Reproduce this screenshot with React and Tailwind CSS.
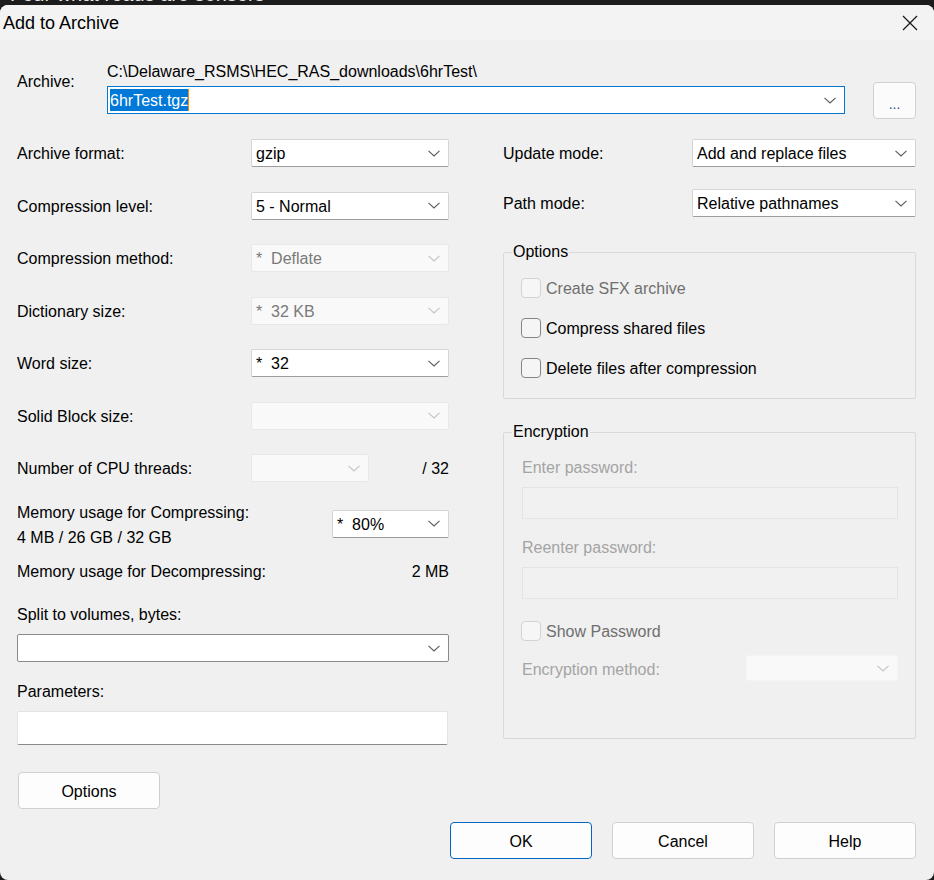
import React from "react";

function Chevron({ disabled }) {
  return (
    <svg width="12" height="7" viewBox="0 0 12 7" className="shrink-0">
      <path
        d="M0.5 0.8 L6 6 L11.5 0.8"
        fill="none"
        stroke={disabled ? "#c4c4c4" : "#5a5a5a"}
        strokeWidth="1.1"
      />
    </svg>
  );
}

function Select({ value, disabled, className = "" }) {
  return (
    <div
      className={
        "flex items-center justify-between pl-[4px] pr-[8px] border rounded-[2px] " +
        (disabled
          ? "bg-[#f9f9f9] border-[#e8e8e8] text-[#7a7a7a] "
          : "bg-white border-[#d4d4d4] border-b-[#9c9c9c] text-black ") +
        className
      }
    >
      <span className="whitespace-pre leading-[20px] pt-[2px]">{value}</span>
      <Chevron disabled={disabled} />
    </div>
  );
}

function Row({ label, children }) {
  return (
    <div className="flex items-center justify-between h-[28px]">
      <span className="leading-[20px] pt-[2px]">{label}</span>
      {children}
    </div>
  );
}

function Check({ label, disabled, labelClass = "" }) {
  return (
    <div className="flex items-center h-[20px] gap-[5px]">
      <div
        className={
          "w-[20px] h-[20px] rounded-[4px] border " +
          (disabled
            ? "border-[#d3d3d3] bg-[#f6f6f6]"
            : "border-[#858585] bg-[#f5f5f5]")
        }
      />
      <span
        className={
          "leading-[20px] pt-[2px] " +
          (disabled ? "text-[#6f6f6f] " : "text-black ") +
          labelClass
        }
      >
        {label}
      </span>
    </div>
  );
}

function Button({ children, primary, className = "" }) {
  return (
    <button
      className={
        "w-[142px] h-[37px] rounded-[4px] border bg-[#fdfdfd] text-[16px] text-black pt-[2px] " +
        (primary ? "border-[#0067c0]" : "border-[#d0d0d0]") +
        " " +
        className
      }
    >
      {children}
    </button>
  );
}

export default function App() {
  return (
    <div className="w-[934px] h-[880px] bg-[#1c1c1c] overflow-hidden font-['Liberation_Sans',Arial,sans-serif] text-[16px] text-black">
      {/* strip of the window behind */}
      <div className="h-[5px] overflow-hidden pl-[10px]">
        <div className="-mt-[16px] text-[20px] leading-[20px] text-[#e6e6e6] whitespace-nowrap">
          Four what roads are sensors
        </div>
      </div>

      <div className="h-[875px] bg-[#f0f0f0] rounded-[8px] overflow-hidden flex flex-col">
        {/* title bar */}
        <div className="h-[35px] bg-[#f3f3f3] flex items-center justify-between pl-[3px] pr-[16px]">
          <span className="text-[18px] leading-[22px]">Add to Archive</span>
          <svg width="16" height="16" viewBox="0 0 16 16">
            <path d="M1 1 L15 15 M15 1 L1 15" stroke="#1a1a1a" strokeWidth="1.3" />
          </svg>
        </div>

        <div className="flex flex-col pl-[17px] pr-[18px]">
          {/* archive name */}
          <div className="flex items-start pt-[21px]">
            <div className="w-[90px] pt-[11px] leading-[20px]">Archive:</div>
            <div className="flex flex-col w-[738px]">
              <div className="leading-[20px] h-[20px] pt-[1px] whitespace-nowrap">
                C:\Delaware_RSMS\HEC_RAS_downloads\6hrTest\
              </div>
              <div className="mt-[5px] h-[28px] bg-white border border-[#0078d4] flex items-center justify-between pl-[2px] pr-[8px]">
                <span className="flex items-center h-[22px]">
                  <span className="bg-[#0078d7] text-white leading-[22px] h-[22px] pt-[1px]">6hrTest.tgz</span>
                  <span className="w-[1px] h-[22px] bg-[#ff8a00]" />
                </span>
                <Chevron />
              </div>
            </div>
            <button className="ml-[28px] mt-[21px] w-[43px] h-[37px] rounded-[4px] border border-[#d0d0d0] bg-[#fbfbfb] text-[14px] text-[#1d4f91] leading-[14px] pt-[6px]">
              ...
            </button>
          </div>

          {/* settings columns */}
          <div className="flex gap-[54px] mt-[20px]">
            {/* left column */}
            <div className="flex flex-col w-[432px]">
              <div className="flex flex-col gap-[24.5px]">
                <Row label="Archive format:">
                  <Select value="gzip" className="w-[198px] h-[28px]" />
                </Row>
                <Row label="Compression level:">
                  <Select value="5 - Normal" className="w-[198px] h-[28px]" />
                </Row>
                <Row label="Compression method:">
                  <Select value={"*\u00a0\u00a0Deflate"} disabled className="w-[198px] h-[28px]" />
                </Row>
                <Row label="Dictionary size:">
                  <Select value={"*\u00a0\u00a032 KB"} disabled className="w-[198px] h-[28px]" />
                </Row>
                <Row label="Word size:">
                  <Select value={"*\u00a0\u00a032"} className="w-[198px] h-[28px]" />
                </Row>
                <Row label="Solid Block size:">
                  <Select value="" disabled className="w-[198px] h-[28px]" />
                </Row>
                <Row label="Number of CPU threads:">
                  <div className="w-[198px] flex items-center justify-between">
                    <Select value="" disabled className="w-[118px] h-[28px]" />
                    <span className="leading-[20px] pt-[2px]">/ 32</span>
                  </div>
                </Row>
              </div>

              <div className="mt-[16.5px] h-[50px] flex items-center justify-between">
                <div className="h-[50px] leading-[25px] pt-[1px]">
                  <div>Memory usage for Compressing:</div>
                  <div>4 MB / 26 GB / 32 GB</div>
                </div>
                <Select value={"*\u00a0\u00a080%"} className="w-[117px] h-[28px]" />
              </div>

              <div className="mt-[12.5px] h-[20px] leading-[20px] pt-[1px] flex justify-between">
                <span>Memory usage for Decompressing:</span>
                <span>2 MB</span>
              </div>

              <div className="mt-[23px] h-[20px] leading-[20px] pt-[1px]">Split to volumes, bytes:</div>
              <div className="mt-[10px] h-[28px] bg-white border border-[#8a8a8a] rounded-[2px] flex items-center justify-end pr-[8px]">
                <Chevron />
              </div>

              <div className="mt-[19px] h-[20px] leading-[20px] pt-[1px]">Parameters:</div>
              <div className="mt-[10px] h-[34px] w-[431px] bg-white border border-[#e3e3e3] border-b-[#8a8a8a] rounded-[2px]" />

              <Button className="mt-[27px] ml-[1px]">Options</Button>
            </div>

            {/* right column */}
            <div className="flex flex-col w-[413px]">
              <Row label="Update mode:">
                <Select value="Add and replace files" className="w-[224px] h-[28px]" />
              </Row>
              <div className="mt-[22px]">
                <Row label="Path mode:">
                  <Select value="Relative pathnames" className="w-[224px] h-[28px]" />
                </Row>
              </div>

              <fieldset className="mt-[25px] border border-[#d9d9d9] rounded-[2px]">
                <legend className="ml-[8px] px-[1px] leading-[20px]">Options</legend>
                <div className="flex flex-col gap-[20px] pt-[16px] pb-[20px] pl-[17px]">
                  <Check label="Create SFX archive" disabled labelClass="text-[#6f6f6f]" />
                  <Check label="Compress shared files" />
                  <Check label="Delete files after compression" />
                </div>
              </fieldset>

              <fieldset className="mt-[23px] border border-[#d9d9d9] rounded-[2px]">
                <legend className="ml-[8px] px-[1px] leading-[20px]">Encryption</legend>
                <div className="flex flex-col pt-[15px] pb-[57px] pl-[18px] pr-[17px]">
                  <div className="h-[20px] leading-[20px] pt-[1px] text-[#a4a4a4]">Enter password:</div>
                  <div className="mt-[10px] h-[32px] border border-[#e4e4e4] bg-[#f1f1f1]" />
                  <div className="mt-[18px] h-[20px] leading-[20px] pt-[1px] text-[#a4a4a4]">Reenter password:</div>
                  <div className="mt-[10px] h-[32px] border border-[#e4e4e4] bg-[#f1f1f1]" />
                  <div className="mt-[22px] -ml-[1px]">
                    <Check label="Show Password" disabled />
                  </div>
                  <div className="mt-[14px] h-[26px] flex items-center justify-between">
                    <span className="leading-[20px] text-[#a4a4a4] pt-[3px]">Encryption method:</span>
                    <Select value="" disabled className="w-[152px] h-[26px] border-[#f4f4f4]" />
                  </div>
                </div>
              </fieldset>
            </div>
          </div>

          {/* dialog buttons */}
          <div className="mt-[13px] flex justify-end gap-[20px]">
            <Button primary>OK</Button>
            <Button>Cancel</Button>
            <Button>Help</Button>
          </div>
        </div>
      </div>
    </div>
  );
}
